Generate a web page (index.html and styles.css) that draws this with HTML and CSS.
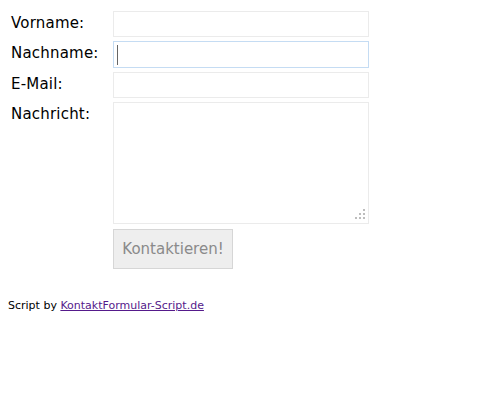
FILE: index.html
```html
<!DOCTYPE html>
<html lang="de">
<head>
    <meta charset="UTF-8">
    <meta name="viewport" content="width=device-width, initial-scale=1.0">
    <title>Kontaktformular</title>
    <link rel="stylesheet" href="styles.css">
</head>
<body>
    <form class="kontakt" onsubmit="return false;">
        <label class="feld-label" for="vorname">Vorname:</label>
        <input class="feld" type="text" id="vorname" name="vorname">

        <label class="feld-label" for="nachname">Nachname:</label>
        <div class="feld-wrap">
            <input class="feld feld-aktiv" type="text" id="nachname" name="nachname">
            <span class="caret"></span>
        </div>

        <label class="feld-label" for="email">E-Mail:</label>
        <input class="feld" type="text" id="email" name="email">

        <label class="feld-label" for="nachricht">Nachricht:</label>
        <div class="feld-wrap">
            <textarea class="feld nachricht" id="nachricht" name="nachricht"></textarea>
            <svg class="grip" width="10" height="10" viewBox="0 0 10 10">
                <rect x="8" y="0" width="2" height="2" />
                <rect x="4" y="4" width="2" height="2" />
                <rect x="8" y="4" width="2" height="2" />
                <rect x="0" y="8" width="2" height="2" />
                <rect x="4" y="8" width="2" height="2" />
                <rect x="8" y="8" width="2" height="2" />
            </svg>
        </div>

        <span></span>
        <div><button class="senden" type="submit">Kontaktieren!</button></div>
    </form>

    <p class="credit">Script by <a href="#">KontaktFormular-Script.de</a></p>
</body>
</html>
```

FILE: styles.css
```css
body {
    margin: 8px;
    background: #fff;
    font-family: "DejaVu Sans", Verdana, sans-serif;
    color: #000;
}
.kontakt {
    display: grid;
    grid-template-columns: 102px 256px;
    row-gap: 4px;
    padding: 3px;
}
.feld-label {
    font-size: 15px;
    line-height: 20px;
    padding-top: 2px;
    letter-spacing: 0.2px;
}
.feld {
    box-sizing: border-box;
    width: 256px;
    height: 26px;
    margin: 0;
    border: 1px solid #ebebeb;
    background: #fff;
    font-family: inherit;
    font-size: 13px;
    outline: none;
}
.feld-wrap {
    position: relative;
}
.feld-aktiv {
    border-color: #c5dcf3;
    height: 27px;
}
.caret {
    position: absolute;
    left: 4px;
    top: 4px;
    width: 1px;
    height: 20px;
    background: #666;
}
.nachricht {
    height: 122px;
    resize: none;
    display: block;
}
.grip {
    position: absolute;
    right: 4px;
    bottom: 5px;
    fill: #bdbdbd;
}
.senden {
    margin-top: 1px;
    width: 120px;
    height: 40px;
    background: #eee;
    border: 1px solid #d6d6d6;
    color: #8a8a8a;
    font-family: inherit;
    font-size: 15px;
    padding: 0;
}
.credit {
    margin: 27px 0 0;
    font-size: 11px;
}
.credit a {
    color: #551a8b;
}
```
